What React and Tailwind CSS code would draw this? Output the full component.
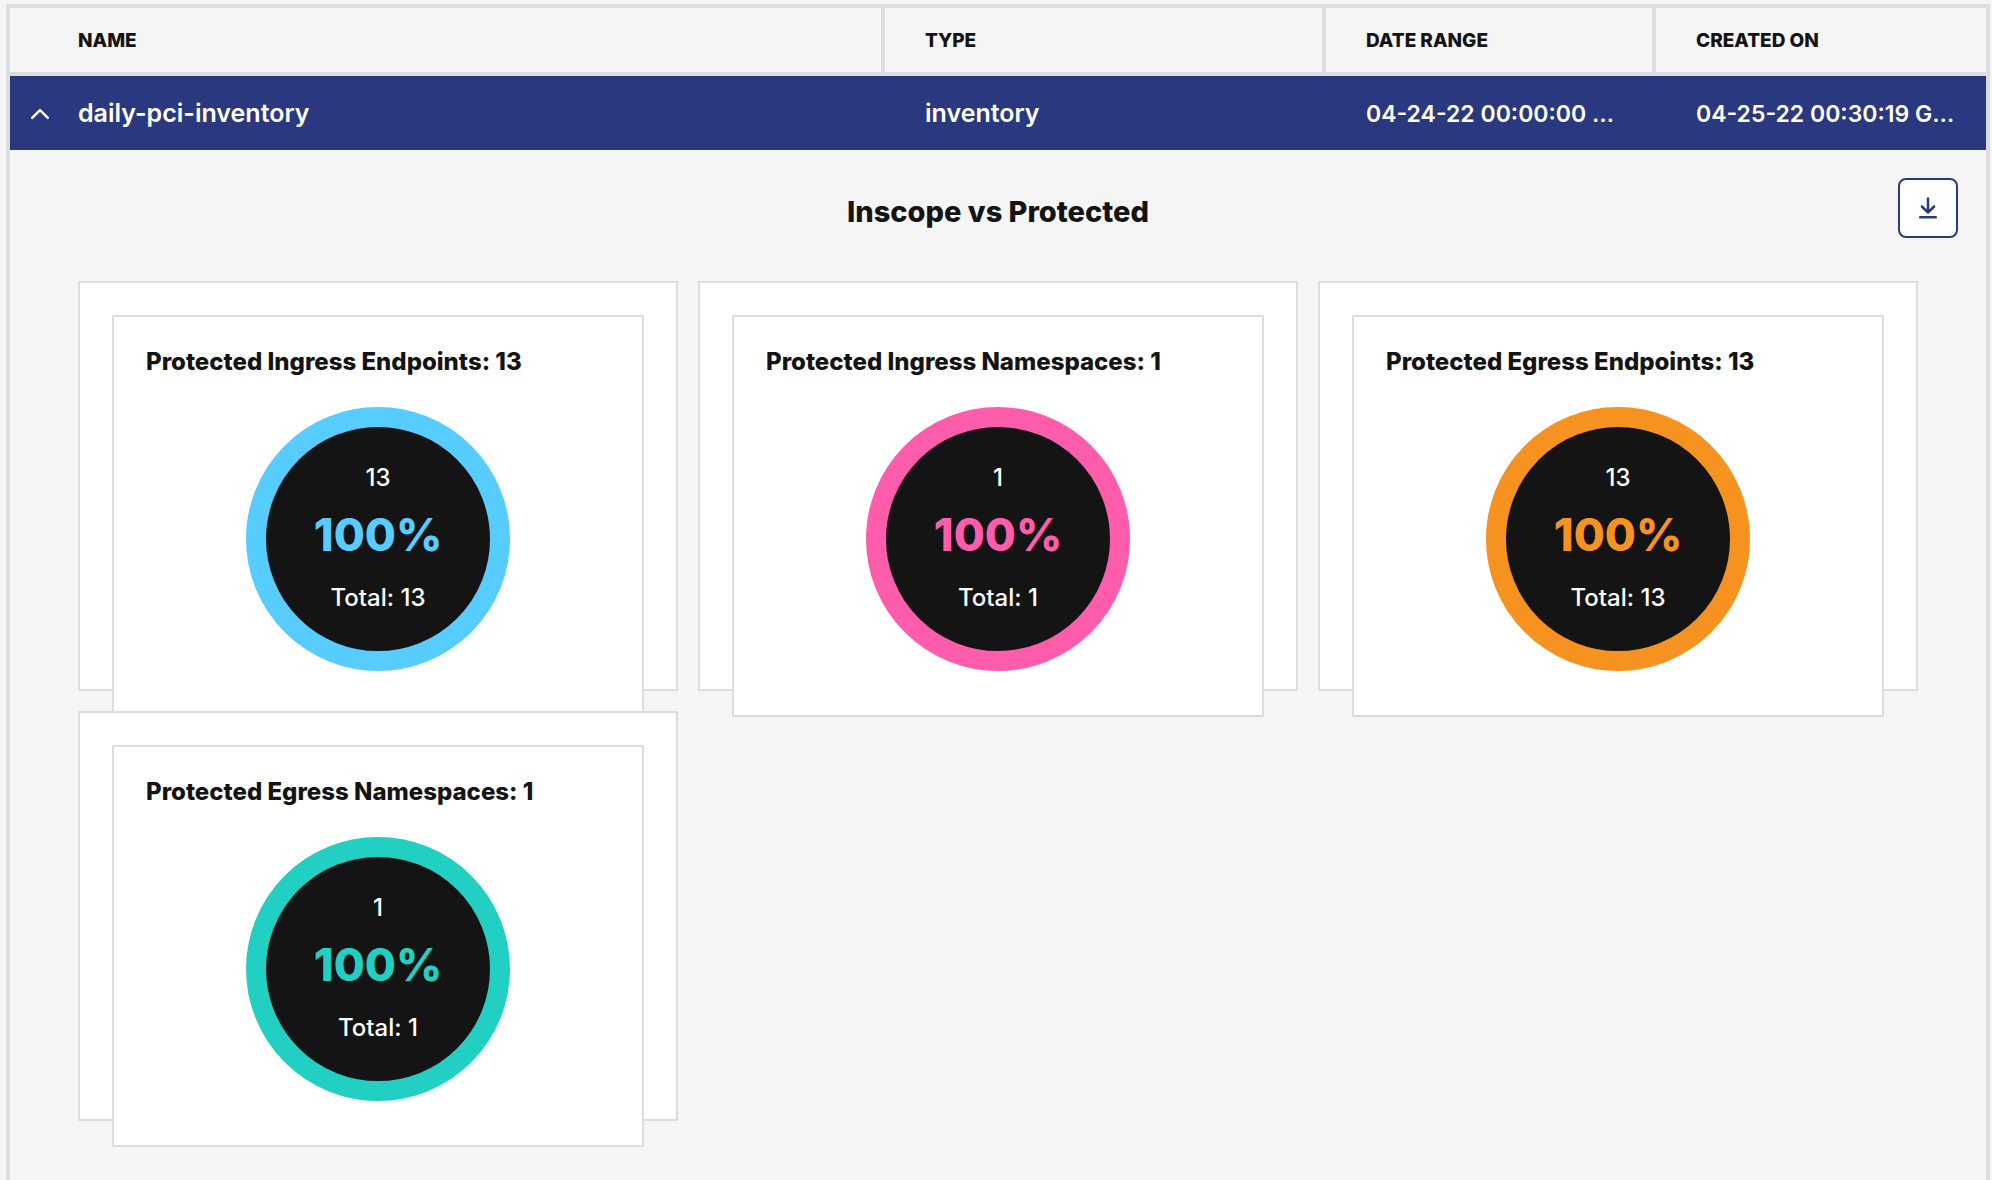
const cards = [
  { title: 'Protected Ingress Endpoints', count: 13, total: 13, ring: 'border-[#57ccff]', text: 'text-[#57ccff]' },
  { title: 'Protected Ingress Namespaces', count: 1, total: 1, ring: 'border-[#ff5cab]', text: 'text-[#ff5cab]' },
  { title: 'Protected Egress Endpoints', count: 13, total: 13, ring: 'border-[#f69220]', text: 'text-[#f69220]' },
  { title: 'Protected Egress Namespaces', count: 1, total: 1, ring: 'border-[#22cfc3]', text: 'text-[#22cfc3]' },
];

const columns = ['NAME', 'TYPE', 'DATE RANGE', 'CREATED ON'];

function ChevronUp() {
  return (
    <svg width="20" height="12" viewBox="0 0 20 12" fill="none" stroke="currentColor" strokeWidth="2.4" strokeLinecap="round" strokeLinejoin="round" aria-hidden="true">
      <path d="M2.200 9.900 10 2.200l7.800 7.700" />
    </svg>
  );
}

function DownloadIcon() {
  return (
    <svg width="20" height="24" viewBox="0 0 20 24" fill="none" stroke="currentColor" strokeWidth="2.500" strokeLinecap="round" strokeLinejoin="round" aria-hidden="true">
      <path d="M10 2.500v14M3.900 10.500 10 16.500l6.100-6M2.200 21.300h15.600" />
    </svg>
  );
}

function StatCard({ title, count, total, ring, text }) {
  const percent = Math.round((count / total) * 100);
  return (
    <section className="border-2 border-[#dcdde1] bg-white p-8">
      <div className="border-2 border-[#dcdde1] bg-white px-8 pt-7 pb-11">
        <h3 className="text-2xl leading-[34px] font-extrabold whitespace-nowrap">
          {title}: {count}
        </h3>
        <div className={`mx-auto mt-7 flex size-[264px] flex-col items-center rounded-full border-[20px] bg-[#141414] pt-8 text-white ${ring}`}>
          <span className="text-2xl leading-[38px] font-medium">{count}</span>
          <span className={`mb-1 text-[45px] leading-[76px] font-extrabold ${text}`}>{percent}%</span>
          <span className="text-2xl leading-[42px] font-medium">Total: {total}</span>
        </div>
      </div>
    </section>
  );
}

export default function App() {
  return (
    <main className="flex min-h-screen bg-[#f5f5f5] pt-1 pr-0.5 pl-1.5 font-['Inter',sans-serif] text-[#141414]">
      <div className="grow border-4 border-b-0 border-[#dcdde1]">
        <table className="w-full table-fixed border-separate border-spacing-0">
          <colgroup>
            <col />
            <col className="w-[441px]" />
            <col className="w-[330px]" />
            <col className="w-[330px]" />
          </colgroup>
          <thead>
            <tr>
              {columns.map((name) => (
                <th key={name} scope="col" className="h-[68px] border-r-4 border-b-4 border-[#dcdde1] pt-0.5 pl-10 text-left text-[19px] font-extrabold first:pl-[68px] last:border-r-0">
                  {name}
                </th>
              ))}
            </tr>
          </thead>
          <tbody>
            <tr className="bg-[#29387f] text-[25px] font-semibold text-white">
              <td className="h-[74px] pt-0.5">
                <div className="flex items-center">
                  <button type="button" aria-label="Collapse row" aria-expanded="true" className="flex w-[68px] shrink-0 justify-start pl-5">
                    <ChevronUp />
                  </button>
                  <span>daily-pci-inventory</span>
                </div>
              </td>
              <td className="pt-0.5 pl-10">inventory</td>
              <td className="pt-0.5 pl-10 text-[23px] whitespace-nowrap">04-24-22 00:00:00 …</td>
              <td className="pt-0.5 pl-10 text-[23px] whitespace-nowrap">04-25-22 00:30:19 G…</td>
            </tr>
            <tr>
              <td colSpan={4} className="pt-7 pb-12 align-top">
                <div className="grid grid-cols-[1fr_auto_1fr] items-center px-7">
                  <h2 className="col-start-2 pt-2 text-[29px] font-extrabold">Inscope vs Protected</h2>
                  <button type="button" aria-label="Download" className="flex size-[60px] items-center justify-center justify-self-end rounded-lg border-2 border-[#29387f] bg-white text-[#29387f]">
                    <DownloadIcon />
                  </button>
                </div>
                <div className="mt-[43px] grid auto-rows-[410px] grid-cols-3 gap-5 px-[68px]">
                  {cards.map((card) => (
                    <StatCard key={card.title} {...card} />
                  ))}
                </div>
              </td>
            </tr>
          </tbody>
        </table>
      </div>
    </main>
  );
}
